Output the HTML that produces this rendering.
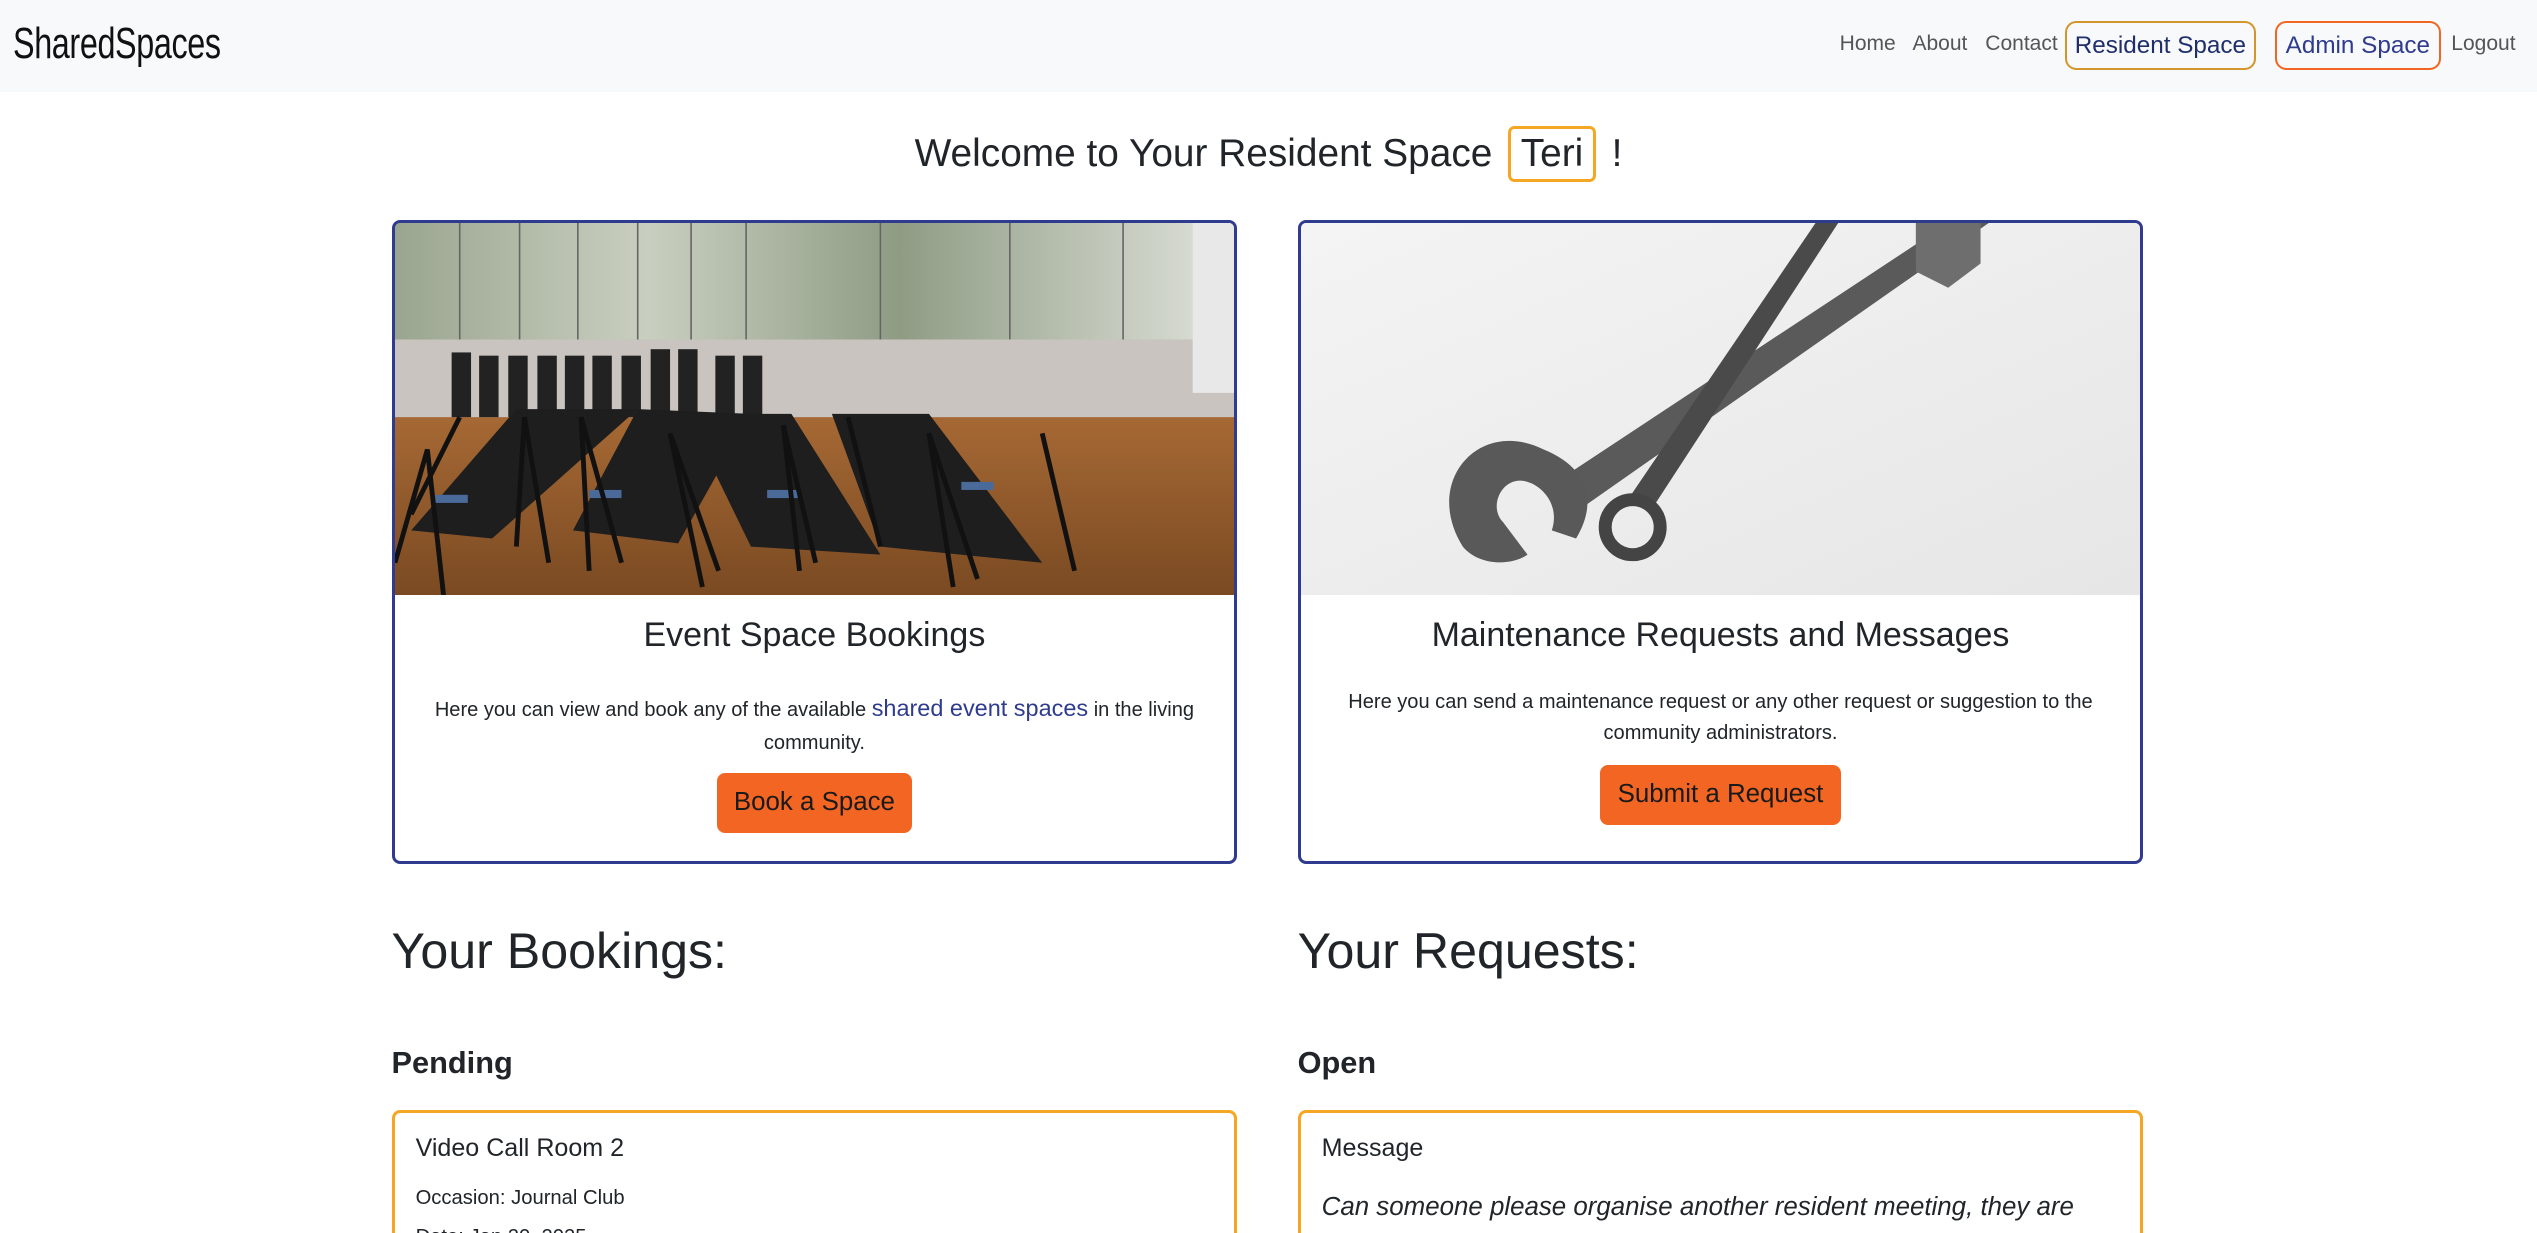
<!DOCTYPE html>
<html><head><meta charset="utf-8">
<style>
html,body{margin:0;padding:0;background:#fff;overflow:hidden;width:2537px;height:1233px;}
#w{zoom:1.618;width:1568px;height:762px;position:relative;font-family:"Liberation Sans",Arial,sans-serif;color:#212529;overflow:hidden;}
.nav{position:absolute;left:0;top:0;width:1568px;height:57px;background:#f8f9fa;}
.brand{position:absolute;left:8px;top:12px;font-size:27px;letter-spacing:-0.3px;transform:scaleX(0.74);transform-origin:left top;color:#111;}
.nl{position:absolute;top:20px;font-size:13px;color:#555;}
.nb{position:absolute;top:13px;height:28px;border:1.5px solid;border-radius:7px;font-size:15px;line-height:28px;text-align:center;}
h1{position:absolute;left:0;width:1568px;top:78px;margin:0;text-align:center;font-weight:normal;font-size:24px;line-height:35px;}
.teri{display:inline-block;border:2px solid #f5a623;border-radius:4px;padding:0 6px;height:31px;line-height:31px;margin:0 3px;}
.card{position:absolute;top:136px;width:519px;height:394px;border:2px solid #2e3b8f;border-radius:5px;overflow:hidden;background:#fff;}
.img{position:absolute;left:0;top:0;width:519px;height:230px;}
.ct{position:absolute;left:0;width:100%;text-align:center;font-size:21px;}
.cx{position:absolute;left:10px;right:10px;text-align:center;font-size:12.4px;line-height:20px;}
.btn{position:absolute;background:#f26522;color:#1a1a1a;border-radius:5px;font-size:16px;text-align:center;}
.h2{position:absolute;top:570px;font-size:31px;}
.h5{position:absolute;top:646px;font-size:19px;font-weight:bold;}
.oc{position:absolute;top:686px;width:519px;height:80px;border:2px solid #f5a623;border-bottom:none;border-radius:5px 5px 0 0;overflow:hidden;}
</style></head><body><div id="w">
<div class="nav">
<div class="brand">SharedSpaces</div>
<div class="nl" style="left:1137px">Home</div>
<div class="nl" style="left:1182px">About</div>
<div class="nl" style="left:1227px">Contact</div>
<div class="nb" style="left:1276px;width:116px;border-color:#d4952a;color:#1f2f6b">Resident Space</div>
<div class="nb" style="left:1406px;width:100px;border-color:#f26522;color:#2e3b8f">Admin Space</div>
<div class="nl" style="left:1515px">Logout</div>
</div>
<h1>Welcome to Your Resident Space <span class="teri">Teri</span> !</h1>

<div class="card" style="left:242px">
<svg class="img" viewBox="0 0 519 230" preserveAspectRatio="none">
<defs>
<linearGradient id="fl" x1="0" y1="0" x2="0" y2="1"><stop offset="0" stop-color="#8a5a2c"/><stop offset="0.5" stop-color="#a86a35"/><stop offset="1" stop-color="#7a4a22"/></linearGradient>
<linearGradient id="wn" x1="0" y1="0" x2="1" y2="0"><stop offset="0" stop-color="#9aa58f"/><stop offset="0.3" stop-color="#c9cfc0"/><stop offset="0.6" stop-color="#8f9c84"/><stop offset="1" stop-color="#e0e3dc"/></linearGradient>
</defs>
<rect width="519" height="230" fill="url(#fl)"/>
<rect width="519" height="72" fill="url(#wn)"/>
<rect y="72" width="519" height="48" fill="#c9c4c0"/>
<g fill="#222"><rect x="35" y="80" width="12" height="40"/><rect x="52" y="82" width="12" height="38"/><rect x="70" y="82" width="12" height="38"/><rect x="88" y="82" width="12" height="38"/><rect x="105" y="82" width="12" height="38"/><rect x="122" y="82" width="12" height="38"/><rect x="140" y="82" width="12" height="38"/><rect x="158" y="78" width="12" height="42"/><rect x="175" y="78" width="12" height="42"/><rect x="198" y="82" width="12" height="38"/><rect x="215" y="82" width="12" height="38"/></g>
<g fill="#1e1e1e"><polygon points="10,190 75,115 150,115 60,195"/><polygon points="110,190 150,115 220,118 175,198"/><polygon points="220,200 180,118 245,118 300,205"/><polygon points="300,200 270,118 330,118 400,210"/></g>
<g fill="#4a6a9a"><rect x="25" y="168" width="20" height="5"/><rect x="120" y="165" width="20" height="5"/><rect x="230" y="165" width="20" height="5"/><rect x="350" y="160" width="20" height="5"/></g>
<g stroke="#111" stroke-width="3" fill="none"><path d="M0 210 L20 140 L30 230"/><path d="M75 200 L80 120 L95 210"/><path d="M140 210 L115 120 L120 215"/><path d="M200 215 L170 130 L190 225"/><path d="M260 210 L240 125 L250 215"/><path d="M300 200 L280 120"/><path d="M10 180 L40 120"/><path d="M360 220 L330 130 L345 225"/><path d="M420 215 L400 130"/></g>
<rect x="493" y="0" width="26" height="105" fill="#e8e8e8"/>
<g stroke="#666" stroke-width="1"><line x1="40" y1="0" x2="40" y2="72"/><line x1="77" y1="0" x2="77" y2="72"/><line x1="113" y1="0" x2="113" y2="72"/><line x1="150" y1="0" x2="150" y2="72"/><line x1="183" y1="0" x2="183" y2="72"/><line x1="217" y1="0" x2="217" y2="72"/><line x1="300" y1="0" x2="300" y2="72"/><line x1="380" y1="0" x2="380" y2="72"/><line x1="450" y1="0" x2="450" y2="72"/></g>
</svg>
<div class="ct" style="top:243px">Event Space Bookings</div>
<div class="cx" style="top:290px">Here you can view and book any of the available <span style="color:#2e3b8f;font-size:14.5px">shared event spaces</span> in the living community.</div>
<div class="btn" style="left:199px;top:340px;width:121px;height:37px;line-height:37px">Book a Space</div>
</div>

<div class="card" style="left:802px">
<svg class="img" viewBox="0 0 519 230" preserveAspectRatio="none">
<defs><linearGradient id="bg2" x1="0" y1="0" x2="1" y2="1"><stop offset="0" stop-color="#f4f4f4"/><stop offset="1" stop-color="#e6e6e6"/></linearGradient></defs>
<rect width="519" height="230" fill="url(#bg2)"/>
<path d="M400 0 L425 0 L168 180 L150 165 Z" fill="#5a5a5a"/>
<path d="M380 0 L420 0 L420 25 L400 40 L380 30 Z" fill="#6e6e6e"/>
<path d="M150 140 C110 120 75 160 100 200 C110 212 130 212 140 205 L125 185 C115 175 125 155 140 160 C150 163 160 175 155 190 L170 195 C185 170 175 150 150 140 Z" fill="#595959"/>
<path d="M318 0 L332 0 L218 175 L204 168 Z" fill="#4a4a4a"/>
<circle cx="205" cy="188" r="17" fill="none" stroke="#444" stroke-width="8"/>
</svg>
<div class="ct" style="top:243px">Maintenance Requests and Messages</div>
<div class="cx" style="top:287px;line-height:19px">Here you can send a maintenance request or any other request or suggestion to the community administrators.</div>
<div class="btn" style="left:185px;top:335px;width:149px;height:37px;line-height:37px">Submit a Request</div>
</div>

<div class="h2" style="left:242px">Your Bookings:</div>
<div class="h2" style="left:802px">Your Requests:</div>
<div class="h5" style="left:242px">Pending</div>
<div class="h5" style="left:802px">Open</div>

<div class="oc" style="left:242px">
<div style="position:absolute;left:13px;top:13px;font-size:15.5px">Video Call Room 2</div>
<div style="position:absolute;left:13px;top:46px;font-size:12.5px">Occasion: Journal Club</div>
<div style="position:absolute;left:13px;top:70px;font-size:12.5px">Date: Jan 20, 2025</div>
</div>
<div class="oc" style="left:802px">
<div style="position:absolute;left:13px;top:13px;font-size:15.5px">Message</div>
<div style="position:absolute;left:13px;right:40px;top:45px;font-size:16px;font-style:italic;line-height:26px">Can someone please organise another resident meeting, they are always a great time.</div>
</div>
</div></body></html>
